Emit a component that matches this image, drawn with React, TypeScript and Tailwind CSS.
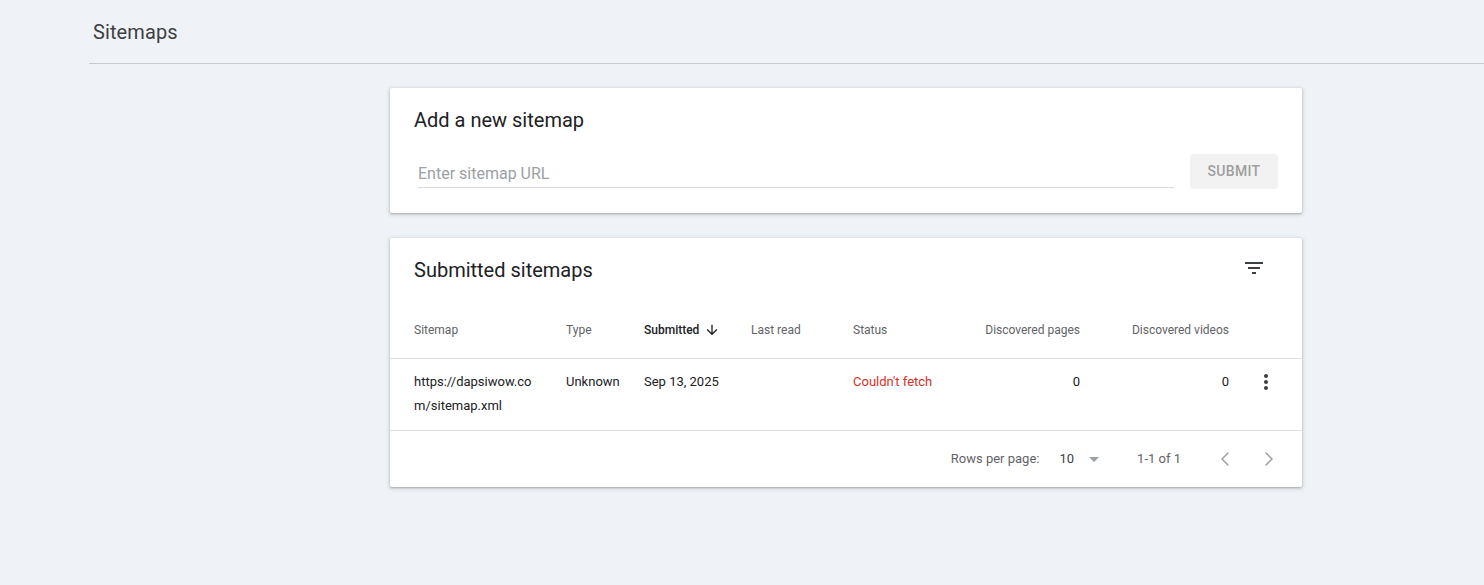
import { ChevronLeft, ChevronRight } from 'lucide-react';

const FilterIcon = () => (
  <svg viewBox="0 0 24 24" className="h-6 w-6 fill-[#3c4043]">
    <path d="M10 18h4v-2h-4v2zM3 6v2h18V6H3zm3 7h12v-2H6v2z" />
  </svg>
);

const MoreVert = () => (
  <svg viewBox="0 0 24 24" className="h-6 w-6 fill-[#3c4043]">
    <path d="M12 8c1.1 0 2-.9 2-2s-.9-2-2-2-2 .9-2 2 .9 2 2 2zm0 2c-1.1 0-2 .9-2 2s.9 2 2 2 2-.9 2-2-.9-2-2-2zm0 6c-1.1 0-2 .9-2 2s.9 2 2 2 2-.9 2-2-.9-2-2-2z" />
  </svg>
);

const ArrowDown = () => (
  <svg viewBox="0 0 24 24" className="h-4 w-4 fill-[#202124]">
    <path d="M20 12l-1.41-1.41L13 16.17V4h-2v12.17l-5.58-5.59L4 12l8 8 8-8z" />
  </svg>
);

const DropDown = () => (
  <svg viewBox="0 0 24 24" className="h-6 w-6 fill-[#9aa0a6]">
    <path d="M7 10l5 5 5-5z" />
  </svg>
);

const cardShadow =
  'bg-white rounded-[2px] shadow-[0_1px_2px_rgba(60,64,67,0.3),0_1px_4px_1px_rgba(60,64,67,0.15)]';

export default function App() {
  return (
    <div className="min-h-[585px] bg-[#eff2f7] font-['Roboto',sans-serif] text-[#202124]">
      {/* Page header */}
      <div className="ml-[89px] h-[64px] border-b border-[#c8cacd] flex items-center pl-[4px]">
        <h1 className="text-[20px] leading-[28px] text-[#3c4043] tracking-[0.1px]">Sitemaps</h1>
      </div>

      <div className="pl-[390px] pt-[24px] flex flex-col gap-[25px]">
        {/* Add sitemap */}
        <div className={`${cardShadow} w-[912px] px-[24px] pt-[18px] pb-[24px]`}>
          <h2 className="text-[20px] leading-[28px] text-[#202124]">Add a new sitemap</h2>
          <div className="mt-[20px] flex items-center gap-[16px]">
            <div className="flex-1 pl-[4px]">
              <div className="border-b border-[#dadce0] h-[33px] flex items-end pb-[1px]">
                <span className="text-[16px] leading-[24px] text-[#9aa0a6]">Enter sitemap URL</span>
              </div>
            </div>
            <button className="w-[88px] h-[35px] rounded-[4px] bg-[#f2f2f2] text-[14px] font-medium tracking-[0.3px] text-[#9e9e9e]">
              SUBMIT
            </button>
          </div>
        </div>

        {/* Submitted sitemaps */}
        <div className={`${cardShadow} w-[912px]`}>
          <div className="h-[63px] flex items-start justify-between pl-[24px] pr-[24px]">
            <h2 className="pt-[18px] text-[20px] leading-[28px]">Submitted sitemaps</h2>
            <button className="mt-[6px] h-[48px] w-[48px] flex items-center justify-center">
              <FilterIcon />
            </button>
          </div>

          {/* header row */}
          <div className="flex h-[58px] items-center border-b border-[#e0e0e0] text-[12px] text-[#5f6368]">
            <div className="w-[176px] pl-[24px]">Sitemap</div>
            <div className="w-[78px]">Type</div>
            <div className="w-[107px] flex items-center gap-[5px] font-medium text-[#202124]">
              Submitted <ArrowDown />
            </div>
            <div className="w-[102px]">Last read</div>
            <div className="w-[107px]">Status</div>
            <div className="w-[120px] text-right">Discovered pages</div>
            <div className="w-[149px] text-right">Discovered videos</div>
            <div className="w-[73px]" />
          </div>

          {/* data row */}
          <div className="flex h-[72px] items-start pt-[11px] border-b border-[#e0e0e0] text-[13px] leading-[24px]">
            <div className="w-[176px] pl-[24px] pr-[28px] break-all">https://dapsiwow.com/sitemap.xml</div>
            <div className="w-[78px]">Unknown</div>
            <div className="w-[107px]">Sep 13, 2025</div>
            <div className="w-[102px]" />
            <div className="w-[107px] text-[#d93025]">Couldn't fetch</div>
            <div className="w-[120px] text-right">0</div>
            <div className="w-[149px] text-right">0</div>
            <div className="w-[73px] flex justify-center">
              <MoreVert />
            </div>
          </div>

          {/* pagination */}
          <div className="flex h-[56px] items-center justify-end pr-[21px] text-[#5f6368]">
            <span className="text-[13px]">Rows per page:</span>
            <span className="ml-[20px] text-[13px] text-[#3c4043]">10</span>
            <span className="ml-[8px]">
              <DropDown />
            </span>
            <span className="ml-[31px] text-[13px]">1-1 of 1</span>
            <ChevronLeft className="ml-[32px] h-6 w-6 text-[#9aa0a6]" strokeWidth={1.5} />
            <ChevronRight className="ml-[20px] h-6 w-6 text-[#9aa0a6]" strokeWidth={1.5} />
          </div>
        </div>
      </div>
    </div>
  );
}
